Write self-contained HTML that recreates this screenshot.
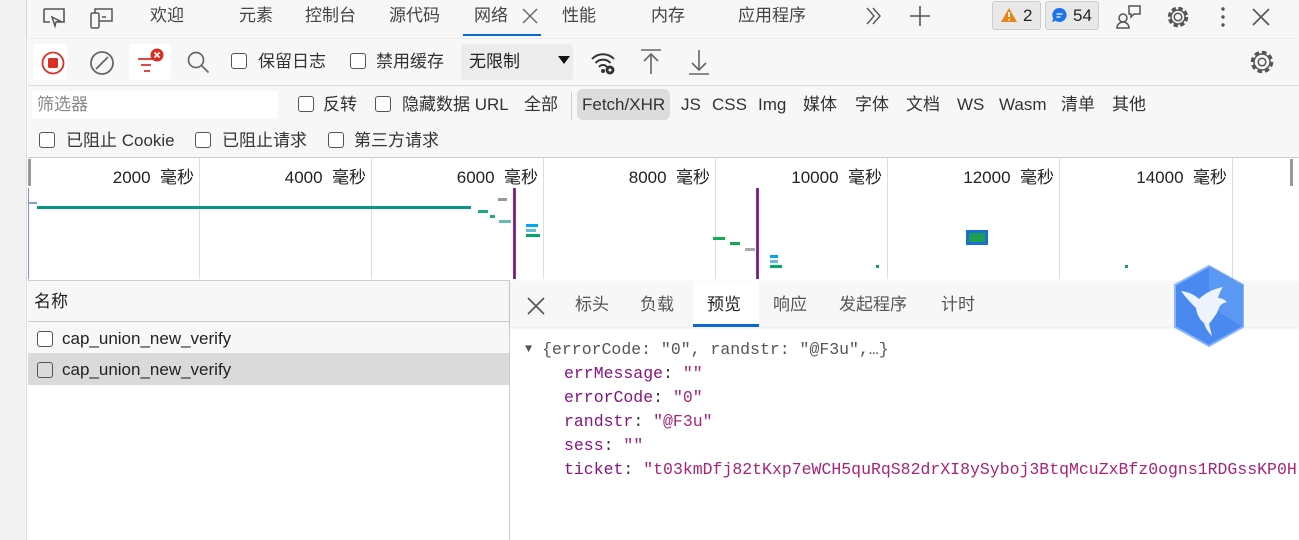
<!DOCTYPE html>
<html><head><meta charset="utf-8"><style>
*{box-sizing:border-box;margin:0;padding:0}
body{width:1299px;height:540px;overflow:hidden;background:#fff;font-family:"Liberation Sans","Noto Sans CJK SC",sans-serif;font-size:17px;line-height:22px;color:#333;position:relative}
.a{position:absolute;white-space:nowrap}
.cb{position:absolute;width:16px;height:16px;border:1.5px solid #555;border-radius:3px;background:#fff}
.mono{font-family:"Liberation Mono","DejaVu Sans Mono",monospace;font-size:16.5px}
.k{color:#881280}
.s{color:#a8237a}
.g{position:absolute;top:158px;width:1px;height:121px;background:#ddd}
.tl{position:absolute;top:167px;font-size:17px;color:#222;text-align:right;white-space:nowrap}
</style></head><body>
<div class="a" style="left:0;top:0;width:27px;height:540px;background:#f3f3f3;border-right:1px solid #ddd"></div>
<!-- top bar -->
<div class="a" style="left:28px;top:0;width:1271px;height:38px;background:#f7f7f7;box-shadow:0 1px 3px rgba(0,0,0,.12)"></div>
<svg class="a" style="left:40px;top:5px" width="80" height="26" viewBox="0 0 80 26"><path d="M4 4h20v13h-7M4 4v13h6" fill="none" stroke="#555" stroke-width="1.6"/><path d="M12 12l8 4-4 1-1 4z" fill="none" stroke="#555" stroke-width="1.5"/><rect x="51" y="8" width="8" height="15" rx="1.5" fill="none" stroke="#555" stroke-width="1.5"/><path d="M55 8V4h17v12H59" fill="none" stroke="#555" stroke-width="1.5"/><path d="M62 12h4" stroke="#555" stroke-width="1.5"/></svg>
<div class="a" style="left:150px;top:5px;color:#444">欢迎</div>
<div class="a" style="left:239px;top:5px;color:#444">元素</div>
<div class="a" style="left:305px;top:5px;color:#444">控制台</div>
<div class="a" style="left:389px;top:5px;color:#444">源代码</div>
<div class="a" style="left:474px;top:5px;color:#444">网络</div>
<svg class="a" style="left:521px;top:7px" width="18" height="18"><path d="M2 2l14 14M16 2L2 16" stroke="#666" stroke-width="1.4"/></svg>
<div class="a" style="left:463px;top:34px;width:78px;height:2px;background:#0a66d0"></div>
<div class="a" style="left:562px;top:5px;color:#444">性能</div>
<div class="a" style="left:651px;top:5px;color:#444">内存</div>
<div class="a" style="left:738px;top:5px;color:#444">应用程序</div>
<svg class="a" style="left:864px;top:6px" width="18" height="20"><path d="M3 2l7 8-7 8M9 2l7 8-7 8" fill="none" stroke="#555" stroke-width="1.4"/></svg>
<svg class="a" style="left:908px;top:4px" width="24" height="24"><path d="M12 2v20M2 12h20" stroke="#555" stroke-width="1.6"/></svg>
<div class="a" style="left:992px;top:1px;width:49px;height:29px;background:#e8e8e8;border:1px solid #ccc;border-radius:3px"></div>
<svg class="a" style="left:1000px;top:7px" width="18" height="16"><path d="M9 1L17 15H1z" fill="#e8851a"/><path d="M9 5v5M9 12v1.5" stroke="#fff" stroke-width="1.8"/></svg>
<div class="a" style="left:1023px;top:5px;color:#222">2</div>
<div class="a" style="left:1045px;top:1px;width:54px;height:29px;background:#e8e8e8;border:1px solid #ccc;border-radius:3px"></div>
<svg class="a" style="left:1051px;top:7px" width="17" height="17"><path d="M8.5 1a7 7 0 1 1-4 12.7L1 15l1.3-3.5A7 7 0 0 1 8.5 1z" fill="#1a73e8"/><path d="M5.5 7h6M5.5 10h4" stroke="#fff" stroke-width="1.2"/></svg>
<div class="a" style="left:1073px;top:5px;color:#222">54</div>
<svg class="a" style="left:1115px;top:3px" width="170" height="28"><circle cx="8" cy="15" r="4" fill="none" stroke="#555" stroke-width="1.5"/><path d="M2 25a6 6 0 0 1 12 0z" fill="none" stroke="#555" stroke-width="1.5"/><path d="M14 3h11v8h-6l-3 3v-3h-2z" fill="none" stroke="#555" stroke-width="1.5"/><g transform="translate(63 14)" fill="none" stroke="#555" stroke-width="1.5"><circle r="3.8"/><circle r="8.5" stroke-dasharray="4.2 2.5" stroke-width="3.5"/><circle r="7"/></g><circle cx="108" cy="6" r="1.7" fill="#555"/><circle cx="108" cy="14" r="1.7" fill="#555"/><circle cx="108" cy="22" r="1.7" fill="#555"/><path d="M138 6l16 16M154 6l-16 16" stroke="#555" stroke-width="1.6"/></svg>
<!-- toolbar -->
<div class="a" style="left:28px;top:39px;width:1271px;height:47px;background:#f7f7f7;border-bottom:1px solid #ddd"></div>
<div class="a" style="left:33px;top:44px;width:34px;height:36px;background:#fff;border-radius:3px"></div>
<svg class="a" style="left:41px;top:51px" width="24" height="24"><circle cx="12" cy="12" r="10.5" fill="none" stroke="#d93025" stroke-width="1.8"/><rect x="7" y="7" width="10" height="10" rx="1.5" fill="#d93025"/></svg>
<svg class="a" style="left:89px;top:50px" width="26" height="26"><circle cx="13" cy="13" r="11" fill="none" stroke="#666" stroke-width="1.8"/><path d="M7 19L19 7" stroke="#666" stroke-width="1.8"/></svg>
<div class="a" style="left:129px;top:44px;width:42px;height:36px;background:#fff;border-radius:3px"></div>
<svg class="a" style="left:136px;top:46px" width="30" height="30"><path d="M2 13h16M5 19h10M8 25h6" stroke="#d93025" stroke-width="1.8"/><circle cx="21" cy="9" r="6.5" fill="#d93025"/><path d="M18.5 6.5l5 5M23.5 6.5l-5 5" stroke="#fff" stroke-width="1.6"/></svg>
<svg class="a" style="left:186px;top:50px" width="26" height="26"><circle cx="10" cy="10" r="7.5" fill="none" stroke="#666" stroke-width="1.7"/><path d="M15.5 15.5l7 7" stroke="#666" stroke-width="1.7"/></svg>
<div class="cb" style="left:231px;top:53px"></div><div class="a" style="left:258px;top:51px">保留日志</div>
<div class="cb" style="left:350px;top:53px"></div><div class="a" style="left:376px;top:51px">禁用缓存</div>
<div class="a" style="left:461px;top:44px;width:112px;height:36px;background:#ececec;border-radius:3px"></div>
<div class="a" style="left:469px;top:51px;color:#222">无限制</div>
<svg class="a" style="left:557px;top:55px" width="14" height="10"><path d="M1 1h12L7 9z" fill="#111"/></svg>
<svg class="a" style="left:590px;top:50px" width="28" height="26"><path d="M2 9a15 15 0 0 1 22 0M5.5 13a10 10 0 0 1 15 0M9 17a5 5 0 0 1 8 0" fill="none" stroke="#333" stroke-width="2"/><circle cx="13" cy="21" r="2" fill="#333"/><circle cx="20" cy="20" r="4.5" fill="#333"/><circle cx="20" cy="20" r="1.5" fill="#f7f7f7"/></svg>
<svg class="a" style="left:639px;top:48px" width="24" height="28"><path d="M2 2h20M12 26V6M5 13l7-7 7 7" fill="none" stroke="#666" stroke-width="1.6"/></svg>
<svg class="a" style="left:687px;top:48px" width="24" height="28"><path d="M2 26h20M12 2v20M5 15l7 7 7-7" fill="none" stroke="#666" stroke-width="1.6"/></svg>
<svg class="a" style="left:1248px;top:48px" width="28" height="28"><g transform="translate(14 14)" fill="none" stroke="#555" stroke-width="1.5"><circle r="3.8"/><circle r="9.5" stroke-dasharray="4.5 2.9" stroke-width="3.5"/><circle r="8"/></g></svg>
<!-- filter rows -->
<div class="a" style="left:28px;top:86px;width:1271px;height:72px;background:#f7f7f7;border-bottom:1px solid #ccc"></div>
<div class="a" style="left:32px;top:91px;width:246px;height:27px;background:#fff"></div>
<div class="a" style="left:37px;top:94px;color:#888">筛选器</div>
<div class="cb" style="left:298px;top:96px"></div><div class="a" style="left:323px;top:94px">反转</div>
<div class="cb" style="left:375px;top:96px"></div><div class="a" style="left:402px;top:94px">隐藏数据 URL</div>
<div class="a" style="left:524px;top:94px">全部</div>
<div class="a" style="left:571px;top:92px;width:1px;height:28px;background:#ccc"></div>
<div class="a" style="left:577px;top:89px;width:93px;height:31px;background:#dcdcdc;border-radius:6px"></div>
<div class="a" style="left:582px;top:94px">Fetch/XHR</div>
<div class="a" style="left:681px;top:94px">JS</div>
<div class="a" style="left:712px;top:94px">CSS</div>
<div class="a" style="left:758px;top:94px">Img</div>
<div class="a" style="left:803px;top:94px">媒体</div>
<div class="a" style="left:855px;top:94px">字体</div>
<div class="a" style="left:906px;top:94px">文档</div>
<div class="a" style="left:957px;top:94px">WS</div>
<div class="a" style="left:999px;top:94px">Wasm</div>
<div class="a" style="left:1061px;top:94px">清单</div>
<div class="a" style="left:1112px;top:94px">其他</div>
<div class="cb" style="left:39px;top:132px"></div><div class="a" style="left:66px;top:130px">已阻止 Cookie</div>
<div class="cb" style="left:195px;top:132px"></div><div class="a" style="left:222px;top:130px">已阻止请求</div>
<div class="cb" style="left:328px;top:132px"></div><div class="a" style="left:354px;top:130px">第三方请求</div>
<!-- timeline -->
<div class="a" style="left:28px;top:159px;width:1264px;height:120px;background:#fff"></div>
<div class="a" style="left:28px;top:159px;width:3px;height:27px;background:#999"></div>
<div class="a" style="left:1290px;top:159px;width:3px;height:27px;background:#999"></div>
<div class="a" style="left:28px;top:188px;width:1px;height:91px;background:#88f"></div>
<div class="g" style="left:199px"></div><div class="g" style="left:371px"></div><div class="g" style="left:543px"></div><div class="g" style="left:715px"></div><div class="g" style="left:887px"></div><div class="g" style="left:1059px"></div><div class="g" style="left:1232px"></div>
<div class="tl" style="right:1105px">2000&nbsp; 毫秒</div>
<div class="tl" style="right:933px">4000&nbsp; 毫秒</div>
<div class="tl" style="right:761px">6000&nbsp; 毫秒</div>
<div class="tl" style="right:589px">8000&nbsp; 毫秒</div>
<div class="tl" style="right:417px">10000&nbsp; 毫秒</div>
<div class="tl" style="right:245px">12000&nbsp; 毫秒</div>
<div class="tl" style="right:72px">14000&nbsp; 毫秒</div>
<div class="a" style="left:37px;top:206px;width:434px;height:3px;background:#0d9488"></div>
<div class="a" style="left:29px;top:202px;width:8px;height:2px;background:#7ab"></div>
<div class="a" style="left:478px;top:210px;width:10px;height:3px;background:#2a8"></div>
<div class="a" style="left:490px;top:215px;width:5px;height:3px;background:#2a8"></div>
<div class="a" style="left:499px;top:220px;width:12px;height:3px;background:#6bb"></div>
<div class="a" style="left:498px;top:198px;width:9px;height:3px;background:#999"></div>
<div class="a" style="left:513px;top:188px;width:3px;height:91px;background:#b0275a"></div>
<div class="a" style="left:514px;top:188px;width:1px;height:91px;background:#33c"></div>
<div class="a" style="left:526px;top:224px;width:12px;height:3px;background:#0ae"></div>
<div class="a" style="left:526px;top:229px;width:10px;height:3px;background:#6bd"></div>
<div class="a" style="left:526px;top:234px;width:14px;height:3px;background:#0a6"></div>
<div class="a" style="left:713px;top:237px;width:12px;height:3px;background:#1a5"></div>
<div class="a" style="left:730px;top:242px;width:10px;height:3px;background:#1a5"></div>
<div class="a" style="left:745px;top:248px;width:10px;height:3px;background:#aaa"></div>
<div class="a" style="left:756px;top:188px;width:3px;height:91px;background:#b0275a"></div>
<div class="a" style="left:757px;top:188px;width:1px;height:91px;background:#33c"></div>
<div class="a" style="left:770px;top:255px;width:8px;height:3px;background:#0ae"></div>
<div class="a" style="left:770px;top:260px;width:8px;height:3px;background:#6bd"></div>
<div class="a" style="left:770px;top:265px;width:12px;height:3px;background:#0a6"></div>
<div class="a" style="left:966px;top:230px;width:22px;height:15px;background:#1a6fd0"></div>
<div class="a" style="left:969px;top:233px;width:16px;height:9px;background:#1aa050"></div>
<div class="a" style="left:876px;top:265px;width:3px;height:3px;background:#1a5"></div>
<div class="a" style="left:1125px;top:265px;width:3px;height:3px;background:#1a5"></div>
<!-- bottom left -->
<div class="a" style="left:28px;top:280px;width:482px;height:1px;background:#ccc"></div>
<div class="a" style="left:28px;top:281px;width:481px;height:41px;background:#f7f7f7;border-bottom:1px solid #ccc"></div>
<div class="a" style="left:34px;top:291px;color:#222">名称</div>
<div class="a" style="left:28px;top:322px;width:481px;height:31px;background:#f7f7f7"></div>
<div class="cb" style="left:37px;top:331px"></div><div class="a" style="left:62px;top:328px;color:#222">cap_union_new_verify</div>
<div class="a" style="left:28px;top:353px;width:481px;height:32px;background:#dadada"></div>
<div class="cb" style="left:37px;top:362px;background:#dadada"></div><div class="a" style="left:62px;top:359px;color:#222">cap_union_new_verify</div>
<div class="a" style="left:509px;top:280px;width:1px;height:260px;background:#ccc"></div>
<!-- bottom right -->
<div class="a" style="left:510px;top:281px;width:789px;height:46px;background:#f7f7f7;box-shadow:0 1px 3px rgba(0,0,0,.1)"></div>
<svg class="a" style="left:526px;top:296px" width="20" height="20"><path d="M2 2l16 16M18 2L2 18" stroke="#555" stroke-width="1.6"/></svg>
<div class="a" style="left:575px;top:294px;color:#555">标头</div>
<div class="a" style="left:640px;top:294px;color:#555">负载</div>
<div class="a" style="left:693px;top:281px;width:66px;height:46px;background:#fff"></div>
<div class="a" style="left:693px;top:324px;width:66px;height:3px;background:#0a66d0"></div>
<div class="a" style="left:707px;top:294px;color:#222">预览</div>
<div class="a" style="left:773px;top:294px;color:#555">响应</div>
<div class="a" style="left:839px;top:294px;color:#555">发起程序</div>
<div class="a" style="left:941px;top:294px;color:#555">计时</div>
<svg class="a" style="left:1171px;top:264px" width="76" height="84" viewBox="0 0 76 84"><path d="M38 2l34 19v42L38 82 4 63V21z" fill="#4a8af0" stroke="#8cb4f8" stroke-width="2"/><path d="M38 2l34 19v42L38 42z" fill="#5b98f4"/><path d="M10 27c8 1 14 4 18 8 6-6 14-10 24-12-3 4-4 8-5 11 4 0 7 2 9 4-4 1-7 3-8 6-3 8-7 12-10 16l3 12c-4-4-7-9-8-13-5-4-7-9-8-15-4-4-10-10-15-17z" fill="#eef3fd"/></svg>
<div class="a mono" style="left:525px;top:339px;color:#555"><span style="font-size:12px;position:relative;top:-2px">▼</span> {errorCode: "0", randstr: "@F3u",…}</div>
<div class="a mono" style="left:564px;top:363px"><span class="k">errMessage</span>: <span class="s">""</span></div>
<div class="a mono" style="left:564px;top:387px"><span class="k">errorCode</span>: <span class="s">"0"</span></div>
<div class="a mono" style="left:564px;top:411px"><span class="k">randstr</span>: <span class="s">"@F3u"</span></div>
<div class="a mono" style="left:564px;top:435px"><span class="k">sess</span>: <span class="s">""</span></div>
<div class="a mono" style="left:564px;top:459px"><span class="k">ticket</span>: <span class="s">"t03kmDfj82tKxp7eWCH5quRqS82drXI8ySyboj3BtqMcuZxBfz0ogns1RDGssKP0H</span></div>
</body></html>
